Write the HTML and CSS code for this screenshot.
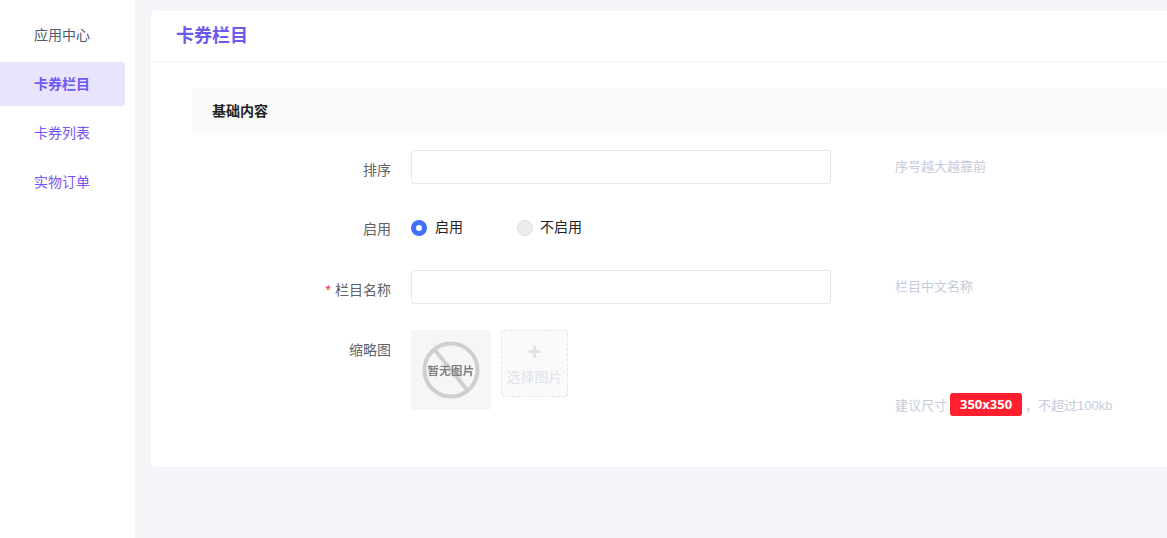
FILE: index.html
```html
<!DOCTYPE html>
<html lang="zh">
<head>
<meta charset="utf-8">
<title>卡券栏目</title>
<link rel="stylesheet" href="styles.css">
</head>
<body>
<div class="layout">
  <nav class="sidebar">
    <a class="nav-item nav-plain">应用中心</a>
    <a class="nav-item nav-active">卡券栏目</a>
    <a class="nav-item">卡券列表</a>
    <a class="nav-item">实物订单</a>
  </nav>
  <main class="main">
    <section class="card">
      <header class="card-head">卡券栏目</header>
      <div class="card-body">
        <div class="section-title">基础内容</div>
        <div class="row row-input">
          <label class="label">排序</label>
          <input class="input" type="text">
          <span class="hint">序号越大越靠前</span>
        </div>
        <div class="row row-radio">
          <label class="label">启用</label>
          <div class="radios">
            <span class="radio-item radio-first"><i class="radio radio-on"></i>启用</span>
            <span class="radio-item"><i class="radio"></i>不启用</span>
          </div>
        </div>
        <div class="row row-input">
          <label class="label"><b class="star">*</b>栏目名称</label>
          <input class="input" type="text">
          <span class="hint">栏目中文名称</span>
        </div>
        <div class="row row-image">
          <label class="label">缩略图</label>
          <div class="thumb">
            <svg class="thumb-art" width="60" height="60" viewBox="0 0 60 60">
              <circle cx="30" cy="30" r="26.5" fill="none" stroke="#cfcfcf" stroke-width="4"/>
              <path d="M13 9L47 51" stroke="#cfcfcf" stroke-width="4"/>
              <text class="thumb-text" x="30" y="34.5" text-anchor="middle">暂无图片</text>
            </svg>
          </div>
          <div class="upload">
            <span class="plus">+</span>
            <span class="upload-text">选择图片</span>
          </div>
          <div class="size-hint">建议尺寸<span class="badge">350x350</span>，不超过100kb</div>
        </div>
      </div>
    </section>
  </main>
</div>
</body>
</html>
```

FILE: styles.css
```css
* { box-sizing: border-box; }
html, body { margin: 0; height: 100%; overflow: hidden; }
body {
  font-family: "Liberation Sans", "Noto Sans CJK SC", sans-serif;
  font-size: 14px;
  color: #515a6e;
  background: #f4f5f9;
}
.layout { display: flex; height: 538px; }
.sidebar {
  width: 135px;
  flex: none;
  background: #fff;
  padding-top: 13px;
  display: flex;
  flex-direction: column;
  gap: 5px;
}
.nav-item {
  width: 125px;
  height: 44px;
  line-height: 44px;
  padding-right: 1px;
  text-align: center;
  color: #7a55f5;
  border-radius: 0 4px 4px 0;
}
.nav-plain { color: #515a6e; }
.nav-active { background: #e9e4fc; font-weight: 700; color: #6c5aee; }
.main { flex: 1; min-width: 0; padding: 11px 0 0 16px; }
.card {
  background: #fff;
  height: 456px;
  border-radius: 4px 0 0 4px;
}
.card-head {
  height: 51px;
  line-height: 50px;
  padding-left: 25px;
  font-size: 18px;
  font-weight: 700;
  color: #6c5aee;
  border-bottom: 1px solid #f4f5f9;
}
.card-body { padding: 26px 0 0 41px; }
.section-title {
  height: 45px;
  line-height: 46px;
  padding-left: 20px;
  background: #f9f9f9;
  border-radius: 4px 0 0 4px;
  font-weight: 700;
  font-size: 14px;
  color: #222;
}
.row { display: flex; }
.label {
  width: 199px;
  flex: none;
  margin-right: 20px;
  text-align: right;
  font-size: 14px;
  font-weight: 400;
  color: #606266;
}
.star { color: #f5222d; font-weight: 400; margin-right: 4px; }
.row-input { height: 34px; }
.row-input .label { padding-top: 10px; line-height: 20px; }
.section-title + .row { margin-top: 17px; }
.row-radio { margin-top: 36px; height: 16px; }
.row-radio .label { line-height: 20px; margin-top: -1px; }
.row-radio + .row { margin-top: 34px; }
.row-image { margin-top: 26px; position: relative; }
.row-image .label { line-height: 20px; padding-top: 10px; }
.input {
  width: 420px;
  height: 34px;
  border: 1px solid #e5e7eb;
  border-radius: 3px;
  background: #fff;
  outline: none;
}
.hint {
  margin-left: 64px;
  font-size: 13px;
  line-height: 34px;
  color: #c6cbdb;
}
.radios { display: flex; align-items: center; height: 16px; color: #222; }
.radio-item { display: flex; align-items: center; line-height: 16px; margin-top: -2px; }
.radio-first { width: 106px; }
.radio {
  width: 16px;
  height: 16px;
  margin-right: 8px;
  border-radius: 50%;
  background: #ececec;
  border: 1px solid #dcdee2;
  margin-top: 2px;
}
.radio-item:not(.radio-first) .radio { margin-right: 7px; }
.radio-on { background: #fff; border: 5px solid #436ff6; }
.thumb {
  width: 80px;
  height: 80px;
  background: #f6f6f6;
  border-radius: 3px;
  display: flex;
  align-items: center;
  justify-content: center;
  flex: none;
}
.thumb-art { filter: blur(0.7px); }
.thumb-text { font-size: 11.5px; font-weight: 700; fill: #808080; letter-spacing: 0.2px; }
.upload {
  width: 67px;
  height: 67px;
  margin-left: 10px;
  flex: none;
  background: #fafafa;
  border: 1px dashed #e3e5ea;
  border-radius: 3px;
  display: flex;
  flex-direction: column;
  align-items: center;
  color: #dfe3ea;
}
.plus { font-size: 24px; line-height: 24px; margin-top: 9px; font-weight: 700; }
.upload-text { font-size: 14px; line-height: 20px; margin-top: 3px; white-space: nowrap; }
.size-hint {
  margin-left: 327px;
  align-self: flex-end;
  margin-bottom: -6px;
  height: 24px;
  display: flex;
  align-items: center;
  font-size: 13px;
  color: #c6cbdb;
  white-space: nowrap;
}
.badge {
  margin: 0 3px;
  width: 72px;
  height: 23px;
  line-height: 23px;
  text-align: center;
  background: #ff1f2f;
  color: #fff;
  font-family: "Open Sans", sans-serif;
  font-weight: 700;
  font-size: 13px;
  border-radius: 3px;
}
```
